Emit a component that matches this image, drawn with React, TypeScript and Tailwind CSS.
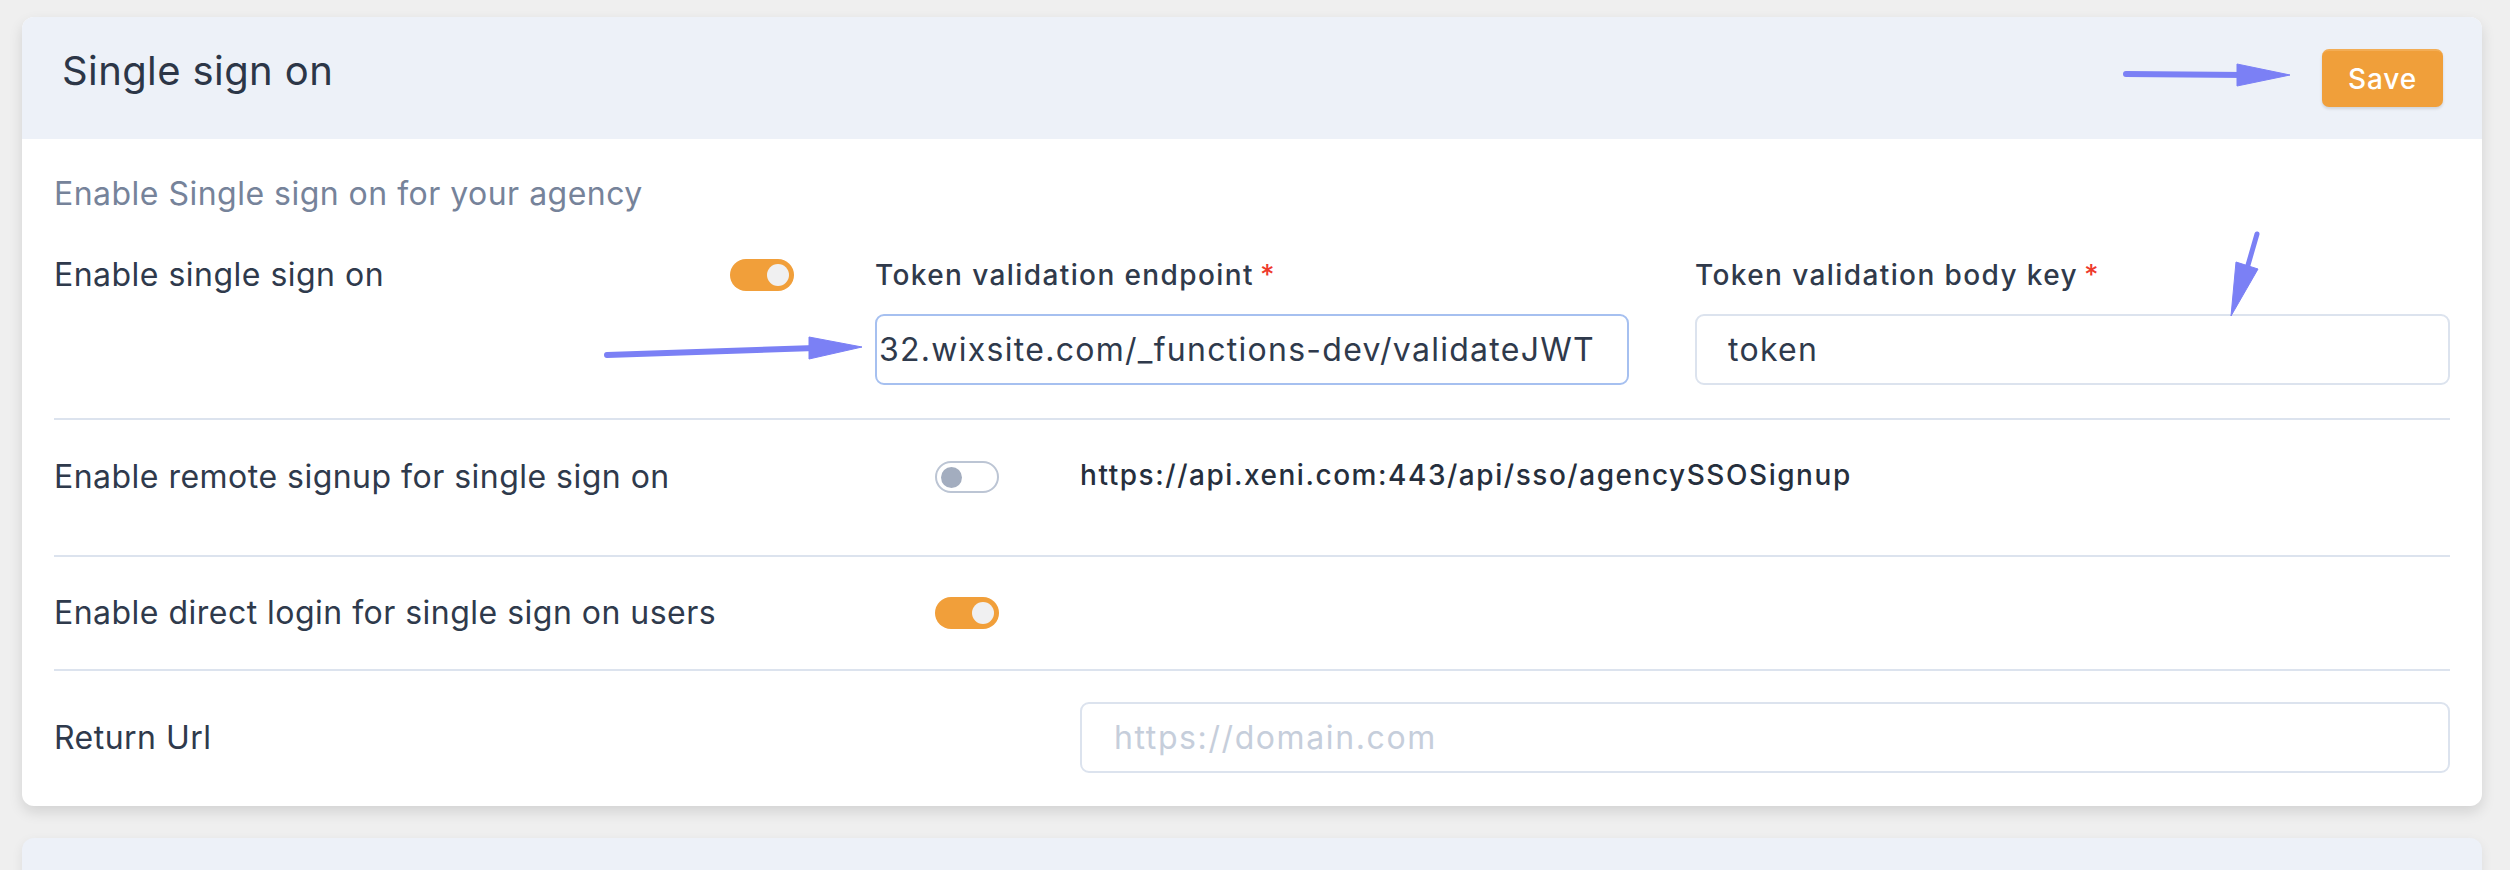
import React from "react";

const FONT = { fontFamily: "Inter, 'Noto Sans', 'Liberation Sans', sans-serif" };

function Toggle({ on }: { on: boolean }) {
  if (on) {
    return (
      <div className="w-[64px] h-[32px] shrink-0 rounded-full bg-[#f19f3a] flex items-center justify-end pr-[5px]">
        <div className="w-[22px] h-[22px] rounded-full bg-[#f0f0f1]" />
      </div>
    );
  }
  return (
    <div className="w-[64px] h-[32px] shrink-0 rounded-full bg-white border-2 border-[#bcc5d4] flex items-center justify-start pl-[4px]">
      <div className="w-[21px] h-[21px] rounded-full bg-[#a3adbf]" />
    </div>
  );
}

function Req() {
  return <span className="text-[#ee3a2c] ml-[6px]">*</span>;
}

export default function App() {
  return (
    <div style={FONT} className="relative w-[2510px] h-[870px] overflow-hidden bg-[#efefef] pl-[22px] pr-[28px] pt-[17px] text-[#2f3a4c]">
      <div className="rounded-[12px] bg-white shadow-[0_6px_14px_rgba(0,0,0,0.12)] overflow-hidden">
        {/* header */}
        <div className="h-[122px] bg-[#edf1f8] flex items-center justify-between pl-[40px] pr-[39px]">
          <div className="text-[40px] leading-[56px] pb-[14px] text-[#2c3647] tracking-[0.01em]">Single sign on</div>
          <button className="w-[121px] h-[58px] rounded-[7px] bg-[#f09f3a] border-t-2 border-[#f3ad55] text-white text-[28px] font-medium tracking-[0.03em] shadow-[0_2px_3px_rgba(0,0,0,0.12)]">
            Save
          </button>
        </div>

        {/* body */}
        <div className="px-[32px] tracking-[0.03em]">
          {/* row 1 */}
          <div className="pt-[31px] pb-[33px] border-b-2 border-[#dce3ee]">
            <div className="text-[32px] leading-[48px] text-[#76839a]">Enable Single sign on for your agency</div>
            <div className="mt-[33px] flex items-start">
              <div className="w-[676px] text-[32px] leading-[48px]">Enable single sign on</div>
              <div className="pt-[8px]">
                <Toggle on />
              </div>
              <div className="ml-[81px] w-[754px]">
                <div className="text-[28px] leading-[48px] font-medium text-[#303a4b] tracking-[0.05em]">
                  Token validation endpoint<Req />
                </div>
                <div className="mt-[15px] h-[71px] rounded-[9px] border-2 border-[#a6c0f0] flex items-center pl-[2px] pr-[32px]">
                  <div className="flex-1 overflow-hidden flex justify-end">
                    <span className="whitespace-nowrap text-[32px] text-[#2f3a4c] tracking-[0.04em]">
                      https://sso-demo-32.wixsite.com/_functions-dev/validateJWT
                    </span>
                  </div>
                </div>
              </div>
              <div className="ml-[66px] flex-1">
                <div className="text-[28px] leading-[48px] font-medium text-[#303a4b] tracking-[0.05em]">
                  Token validation body key<Req />
                </div>
                <div className="mt-[15px] h-[71px] rounded-[9px] border-2 border-[#dce3ee] flex items-center px-[31px]">
                  <span className="text-[32px] text-[#2f3a4c] tracking-[0.04em]">token</span>
                </div>
              </div>
            </div>
          </div>

          {/* row 2 */}
          <div className="pt-[33px] pb-[33px] border-b-2 border-[#dce3ee] flex items-start h-[137px]">
            <div className="w-[881px] text-[32px] leading-[48px]">Enable remote signup for single sign on</div>
            <div className="pt-[8px]">
              <Toggle on={false} />
            </div>
            <div className="ml-[81px] text-[28px] leading-[44px] font-medium text-[#262f3d] tracking-[0.055em]">
              https://api.xeni.com:443/api/sso/agencySSOSignup
            </div>
          </div>

          {/* row 3 */}
          <div className="py-[32px] border-b-2 border-[#dce3ee] flex items-center">
            <div className="w-[881px] text-[32px] leading-[48px]">Enable direct login for single sign on users</div>
            <Toggle on />
          </div>

          {/* row 4 */}
          <div className="pt-[31px] pb-[33px] flex items-center">
            <div className="w-[1026px] text-[32px] leading-[48px]">Return Url</div>
            <input
              readOnly
              placeholder="https://domain.com"
              style={FONT}
              className="flex-1 h-[71px] rounded-[9px] border-2 border-[#dce3ee] px-[32px] text-[32px] tracking-[0.05em] outline-none placeholder:text-[#c6cedb]"
            />
          </div>
        </div>
      </div>

      {/* next card */}
      <div className="mt-[32px] h-[80px] rounded-t-[12px] bg-[#edf1f8] shadow-[0_4px_12px_rgba(0,0,0,0.08)]" />

      {/* annotation arrows */}
      <svg className="absolute left-0 top-0 pointer-events-none" width="2510" height="870" viewBox="0 0 2510 870">
        <g fill="#7b80f5" stroke="#7b80f5">
          <line x1="2126" y1="74" x2="2245" y2="75" strokeWidth="6" strokeLinecap="round" />
          <polygon points="2237,64 2290,75 2237,86" strokeWidth="1" />
          <line x1="607" y1="355" x2="815" y2="348" strokeWidth="6" strokeLinecap="round" />
          <polygon points="809,337 862,347 809,359" strokeWidth="1" />
          <line x1="2257" y1="234" x2="2246" y2="272" strokeWidth="5" strokeLinecap="round" />
          <polygon points="2236,262 2258,269 2231,316" strokeWidth="1" />
        </g>
      </svg>
    </div>
  );
}
